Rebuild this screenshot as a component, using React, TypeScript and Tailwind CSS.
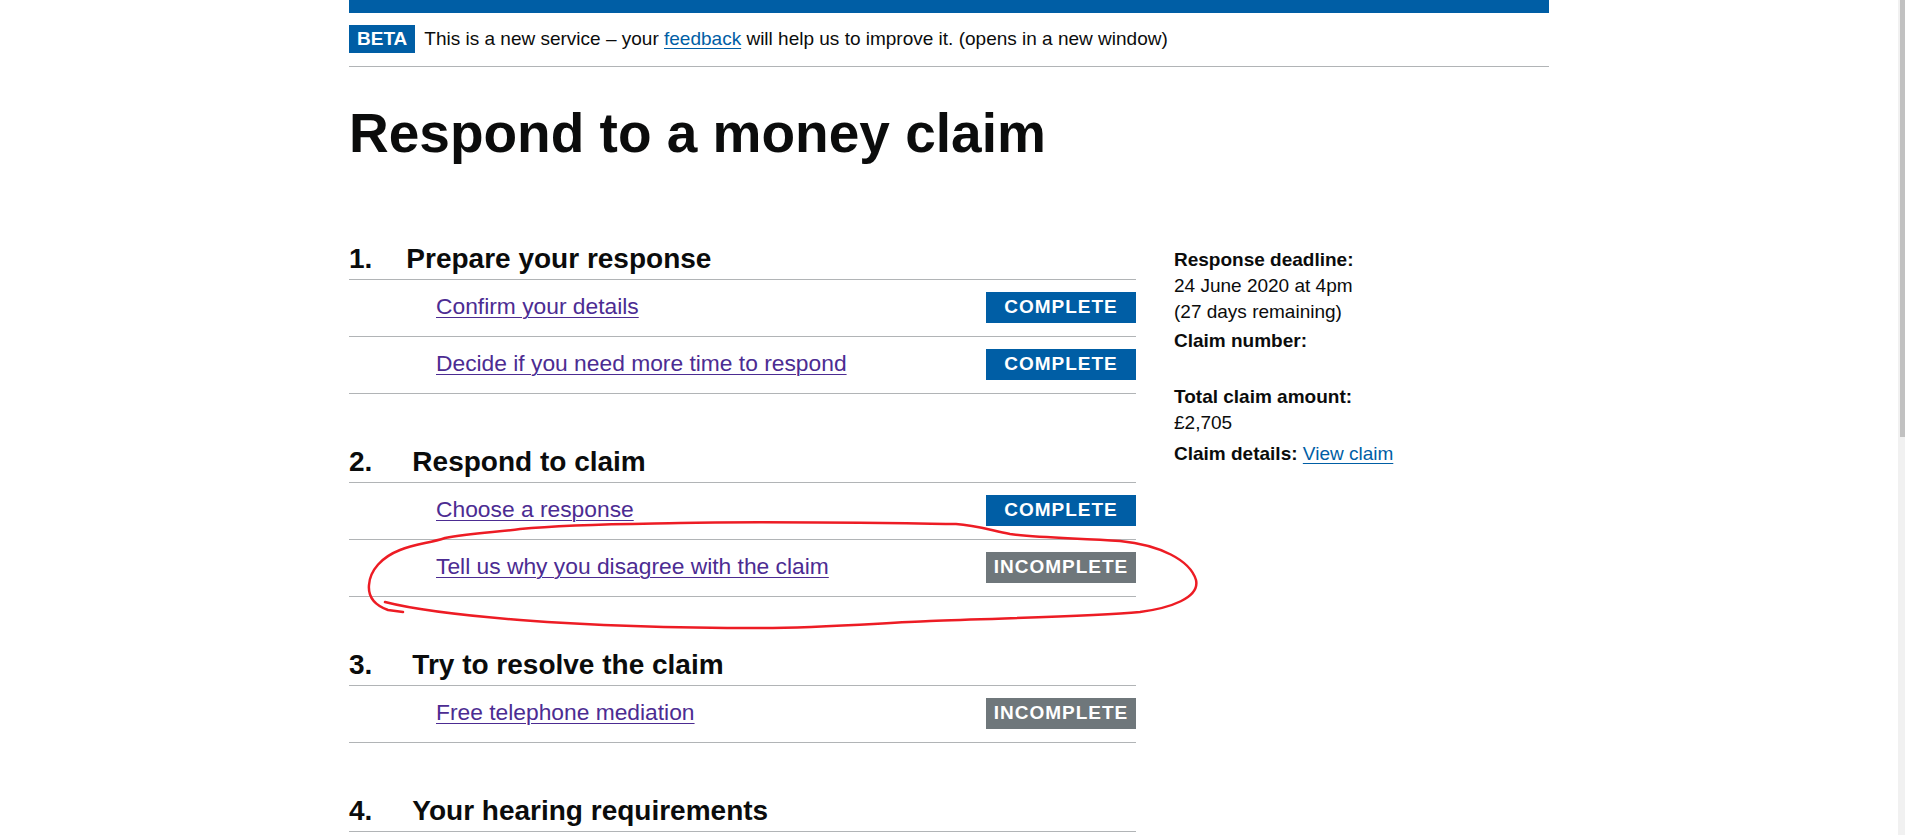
import React from 'react';

type Task = { label: string; done: boolean };
type Section = { num: string; title: string; gap: string; tasks: Task[] };

const sections: Section[] = [
  {
    num: '1.',
    title: 'Prepare your response',
    gap: 'ml-[34px]',
    tasks: [
      { label: 'Confirm your details', done: true },
      { label: 'Decide if you need more time to respond', done: true },
    ],
  },
  {
    num: '2.',
    title: 'Respond to claim',
    gap: 'ml-[40px]',
    tasks: [
      { label: 'Choose a response', done: true },
      { label: 'Tell us why you disagree with the claim', done: false },
    ],
  },
  {
    num: '3.',
    title: 'Try to resolve the claim',
    gap: 'ml-[40px]',
    tasks: [{ label: 'Free telephone mediation', done: false }],
  },
  {
    num: '4.',
    title: 'Your hearing requirements',
    gap: 'ml-[40px]',
    tasks: [],
  },
];

function Tag({ done }: { done: boolean }) {
  return (
    <span
      className={
        'block h-[31px] w-[150px] shrink-0 text-center text-[19px] font-bold uppercase leading-[30px] tracking-[1px] text-white ' +
        (done ? 'bg-[#005ea5]' : 'bg-[#6f777b]')
      }
    >
      {done ? 'Complete' : 'Incomplete'}
    </span>
  );
}

function TaskSection({ section, first }: { section: Section; first: boolean }) {
  return (
    <div className={first ? '' : 'mt-[52px]'}>
      <h2 className="border-b border-[#b1b4b6] pb-[4px] text-[28px] font-bold leading-[32px] text-[#0b0c0c]">
        <span>{section.num}</span>
        <span className={section.gap}>{section.title}</span>
      </h2>
      <ul>
        {section.tasks.map((t) => (
          <li
            key={t.label}
            className="flex items-start justify-between border-b border-[#b1b4b6] pb-[13px] pt-[12px]"
          >
            <a
              href="#"
              className="ml-[87px] text-[22.8px] leading-[28px] text-[#4c2c92] underline decoration-1 underline-offset-[3px]"
            >
              {t.label}
            </a>
            <Tag done={t.done} />
          </li>
        ))}
      </ul>
    </div>
  );
}

export default function App() {
  return (
    <div className="relative min-h-[835px] overflow-hidden bg-white font-['Liberation_Sans',Arial,sans-serif] text-[#0b0c0c]">
      <div className="ml-[349px] w-[1200px] pb-[40px]">
        <div className="h-[13px] bg-[#005ea5]" />

        {/* phase banner */}
        <div className="flex items-center border-b border-[#b1b4b6] pb-[13px] pt-[12px]">
          <strong className="bg-[#005ea5] px-[8px] text-[19px] font-bold leading-[28px] text-white">BETA</strong>
          <p className="ml-[9px] text-[19px] leading-[28px]">
            This is a new service – your{' '}
            <a href="#" className="text-[#005ea5] underline decoration-1 underline-offset-[3px]">
              feedback
            </a>{' '}
            will help us to improve it. (opens in a new window)
          </p>
        </div>

        <h1 className="mt-[39px] text-[55px] font-bold leading-[55px]">Respond to a money claim</h1>

        <div className="mt-[82px] flex">
          <div className="w-[787px]">
            {sections.map((s, i) => (
              <TaskSection key={s.num} section={s} first={i === 0} />
            ))}
          </div>

          <dl className="ml-[38px] pt-[4px] text-[19px] leading-[26px]">
            <div className="mb-[3px]">
              <dt className="font-bold">Response deadline:</dt>
              <dd>24 June 2020 at 4pm</dd>
              <dd>(27 days remaining)</dd>
            </div>
            <div className="mb-[4px]">
              <dt className="font-bold">Claim number:</dt>
              <dd>&nbsp;</dd>
            </div>
            <div className="mb-[5px]">
              <dt className="font-bold">Total claim amount:</dt>
              <dd>£2,705</dd>
            </div>
            <div>
              <dt className="inline font-bold">Claim details:</dt>{' '}
              <dd className="inline">
                <a href="#" className="text-[#005ea5] underline decoration-1 underline-offset-[3px]">
                  View claim
                </a>
              </dd>
            </div>
          </dl>
        </div>
      </div>

      {/* hand-drawn annotation around the disputed task */}
      <svg
        className="pointer-events-none absolute left-0 top-0"
        width="1905"
        height="835"
        viewBox="0 0 1905 835"
        fill="none"
      >
        <path
          d="M403 612 L388 610 C374 605 368 596 369 585 C370 570 382 557 400 550 C415 544 430 543 445 538 C470 533 500 532 520 529 C570 524 620 524 680 523 C760 521 880 523 956 524 C975 525 990 530 1010 534 C1040 538 1080 538 1120 541 C1160 545 1190 560 1196 580 C1200 598 1170 608 1140 612 C1090 617 1000 618 930 621 C880 623 820 628 760 628 C700 628 600 626 520 620 C470 616 420 611 385 602"
          stroke="#ed1c24"
          strokeWidth="2.5"
          strokeLinecap="round"
          strokeLinejoin="round"
        />
      </svg>

      {/* browser scrollbar */}
      <div className="pointer-events-none fixed right-0 top-0 h-[835px] w-[7px] bg-[#f1f1f1]">
        <div className="ml-auto h-[437px] w-[5px] bg-[#c1c1c1]" />
      </div>
    </div>
  );
}
